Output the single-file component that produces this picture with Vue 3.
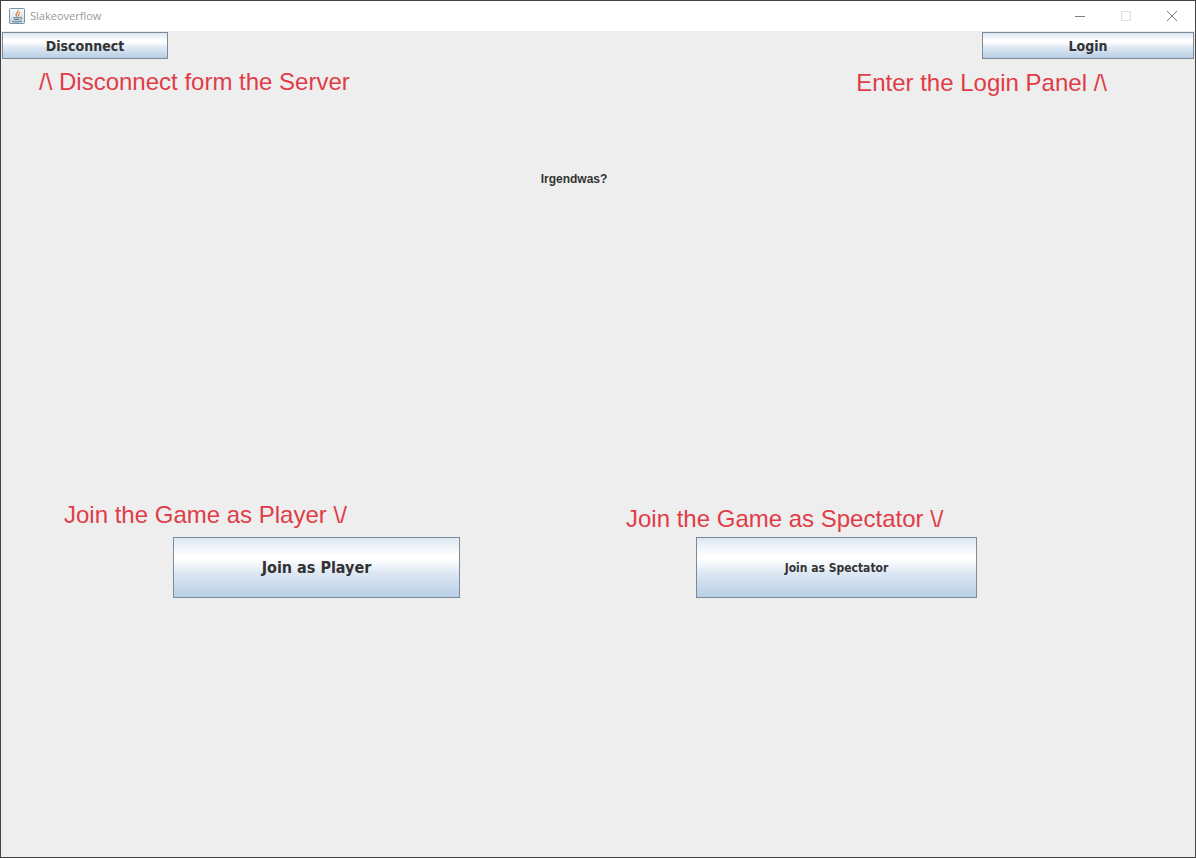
<script setup>
const windowTitle = 'Slakeoverflow'

const joinOptions = [
  { id: 'player', note: 'Join the Game as Player \\/', label: 'Join as Player' },
  { id: 'spectator', note: 'Join the Game as Spectator \\/', label: 'Join as Spectator' },
]
</script>

<template>
  <div class="window">
    <header class="titlebar">
      <svg class="app-icon" viewBox="0 0 16 16" aria-hidden="true">
        <defs>
          <linearGradient id="tile" x1="0" y1="0" x2="0" y2="1">
            <stop offset="0" stop-color="#fdfdfd" />
            <stop offset="1" stop-color="#c9d5de" />
          </linearGradient>
        </defs>
        <rect x="0.5" y="0.5" width="15" height="15" rx="1" fill="url(#tile)" stroke="#7593a9" />
        <path d="M9.200 1.800C10.600 4.400 4.600 5 8 8.600M11.400 4.200C8.400 5.600 10.600 6.600 9.200 8.400" fill="none" stroke="#dc8250" stroke-width="1.200" />
        <path d="M4.200 9.800H10.600M4.800 11.600H10M3.200 13.400C6 14.200 10.400 14 12.800 13.200M10.800 9.400C13.800 8.800 13 11.200 10.900 11.500" fill="none" stroke="#52738c" stroke-width="1" />
      </svg>
      <span class="title">{{ windowTitle }}</span>
      <div class="controls">
        <button class="control" type="button" aria-label="Minimize">
          <svg viewBox="0 0 12 12"><path d="M1 6.500H11" stroke="#808080" /></svg>
        </button>
        <button class="control" type="button" aria-label="Maximize" disabled>
          <svg viewBox="0 0 12 12"><rect x="1.500" y="1.500" width="9" height="9" fill="none" stroke="#dedede" /></svg>
        </button>
        <button class="control" type="button" aria-label="Close">
          <svg viewBox="0 0 12 12"><path d="M1 1L11 11M11 1L1 11" stroke="#777" /></svg>
        </button>
      </div>
    </header>

    <main class="content">
      <div class="toolbar">
        <div class="tool">
          <button class="metal disconnect" type="button">Disconnect</button>
          <p class="note">/\ Disconnect form the Server</p>
        </div>
        <div class="tool right">
          <button class="metal login" type="button">Login</button>
          <p class="note">Enter the Login Panel /\</p>
        </div>
      </div>

      <p class="message">Irgendwas?</p>

      <div class="join-row">
        <section v-for="option in joinOptions" :key="option.id" class="join" :class="option.id">
          <p class="note">{{ option.note }}</p>
          <button class="metal" type="button">{{ option.label }}</button>
        </section>
      </div>
    </main>
  </div>
</template>

<style>
body {
  margin: 0;
}
</style>

<style scoped>
.window {
  box-sizing: border-box;
  min-height: 100vh;
  display: flex;
  flex-direction: column;
  border: 1px solid #434343;
  background: #eeeeee;
  font-family: "Liberation Sans", Arial, sans-serif;
}

.titlebar {
  display: flex;
  align-items: center;
  height: 30px;
  padding-left: 8px;
  background: #ffffff;
}

.app-icon {
  width: 16px;
  height: 16px;
}

.title {
  margin-left: 5px;
  color: #999999;
  font: 11px/16px "Open Sans", "Noto Sans", sans-serif;
}

.controls {
  display: flex;
  margin-left: auto;
}

.control {
  display: grid;
  place-items: center;
  width: 46px;
  height: 28px;
  padding: 0;
  border: 0;
  background: none;
}

.control svg {
  width: 12px;
  height: 12px;
}

.content {
  padding: 1px;
}

.toolbar {
  display: flex;
  justify-content: space-between;
}

.tool {
  display: flex;
  flex-direction: column;
  align-items: flex-start;
  gap: 9px;
}

.tool .note {
  padding-left: 37px;
}

.right {
  align-items: flex-end;
  gap: 10px;
}

.right .note {
  padding: 0 87px 0 0;
}

.note {
  margin: 0;
  color: #e03c48;
  font-size: 24px;
  line-height: 28px;
  white-space: nowrap;
}

.metal {
  box-sizing: border-box;
  padding: 0;
  border: 1px solid #7a8a99;
  border-radius: 0;
  background: linear-gradient(#dde8f3 0%, #ffffff 30%, #ffffff 36%, #dce7f3 60%, #b8cfe5 100%);
  color: #333333;
  font: bold 14px/18px "DejaVu Sans Condensed", "DejaVu Sans", Tahoma, sans-serif;
}

.disconnect {
  width: 166px;
  height: 27px;
}

.login {
  width: 212px;
  height: 27px;
}

.message {
  margin: 74px 48px 0 0;
  color: #333333;
  font-size: 12px;
  font-weight: bold;
  line-height: 16px;
  text-align: center;
}

.join-row {
  display: grid;
  grid-template-columns: 1fr 1fr;
  align-items: end;
  margin-top: 314px;
  padding: 0 6px 0 62px;
}

.join .metal {
  display: block;
  height: 61px;
}

.player .note {
  margin-bottom: 8px;
}

.player .metal {
  width: 287px;
  margin-left: 109px;
  font-size: 16px;
}

.spectator .note {
  margin-bottom: 4px;
}

.spectator .metal {
  width: 281px;
  margin-left: 70px;
  font-size: 12px;
}
</style>
